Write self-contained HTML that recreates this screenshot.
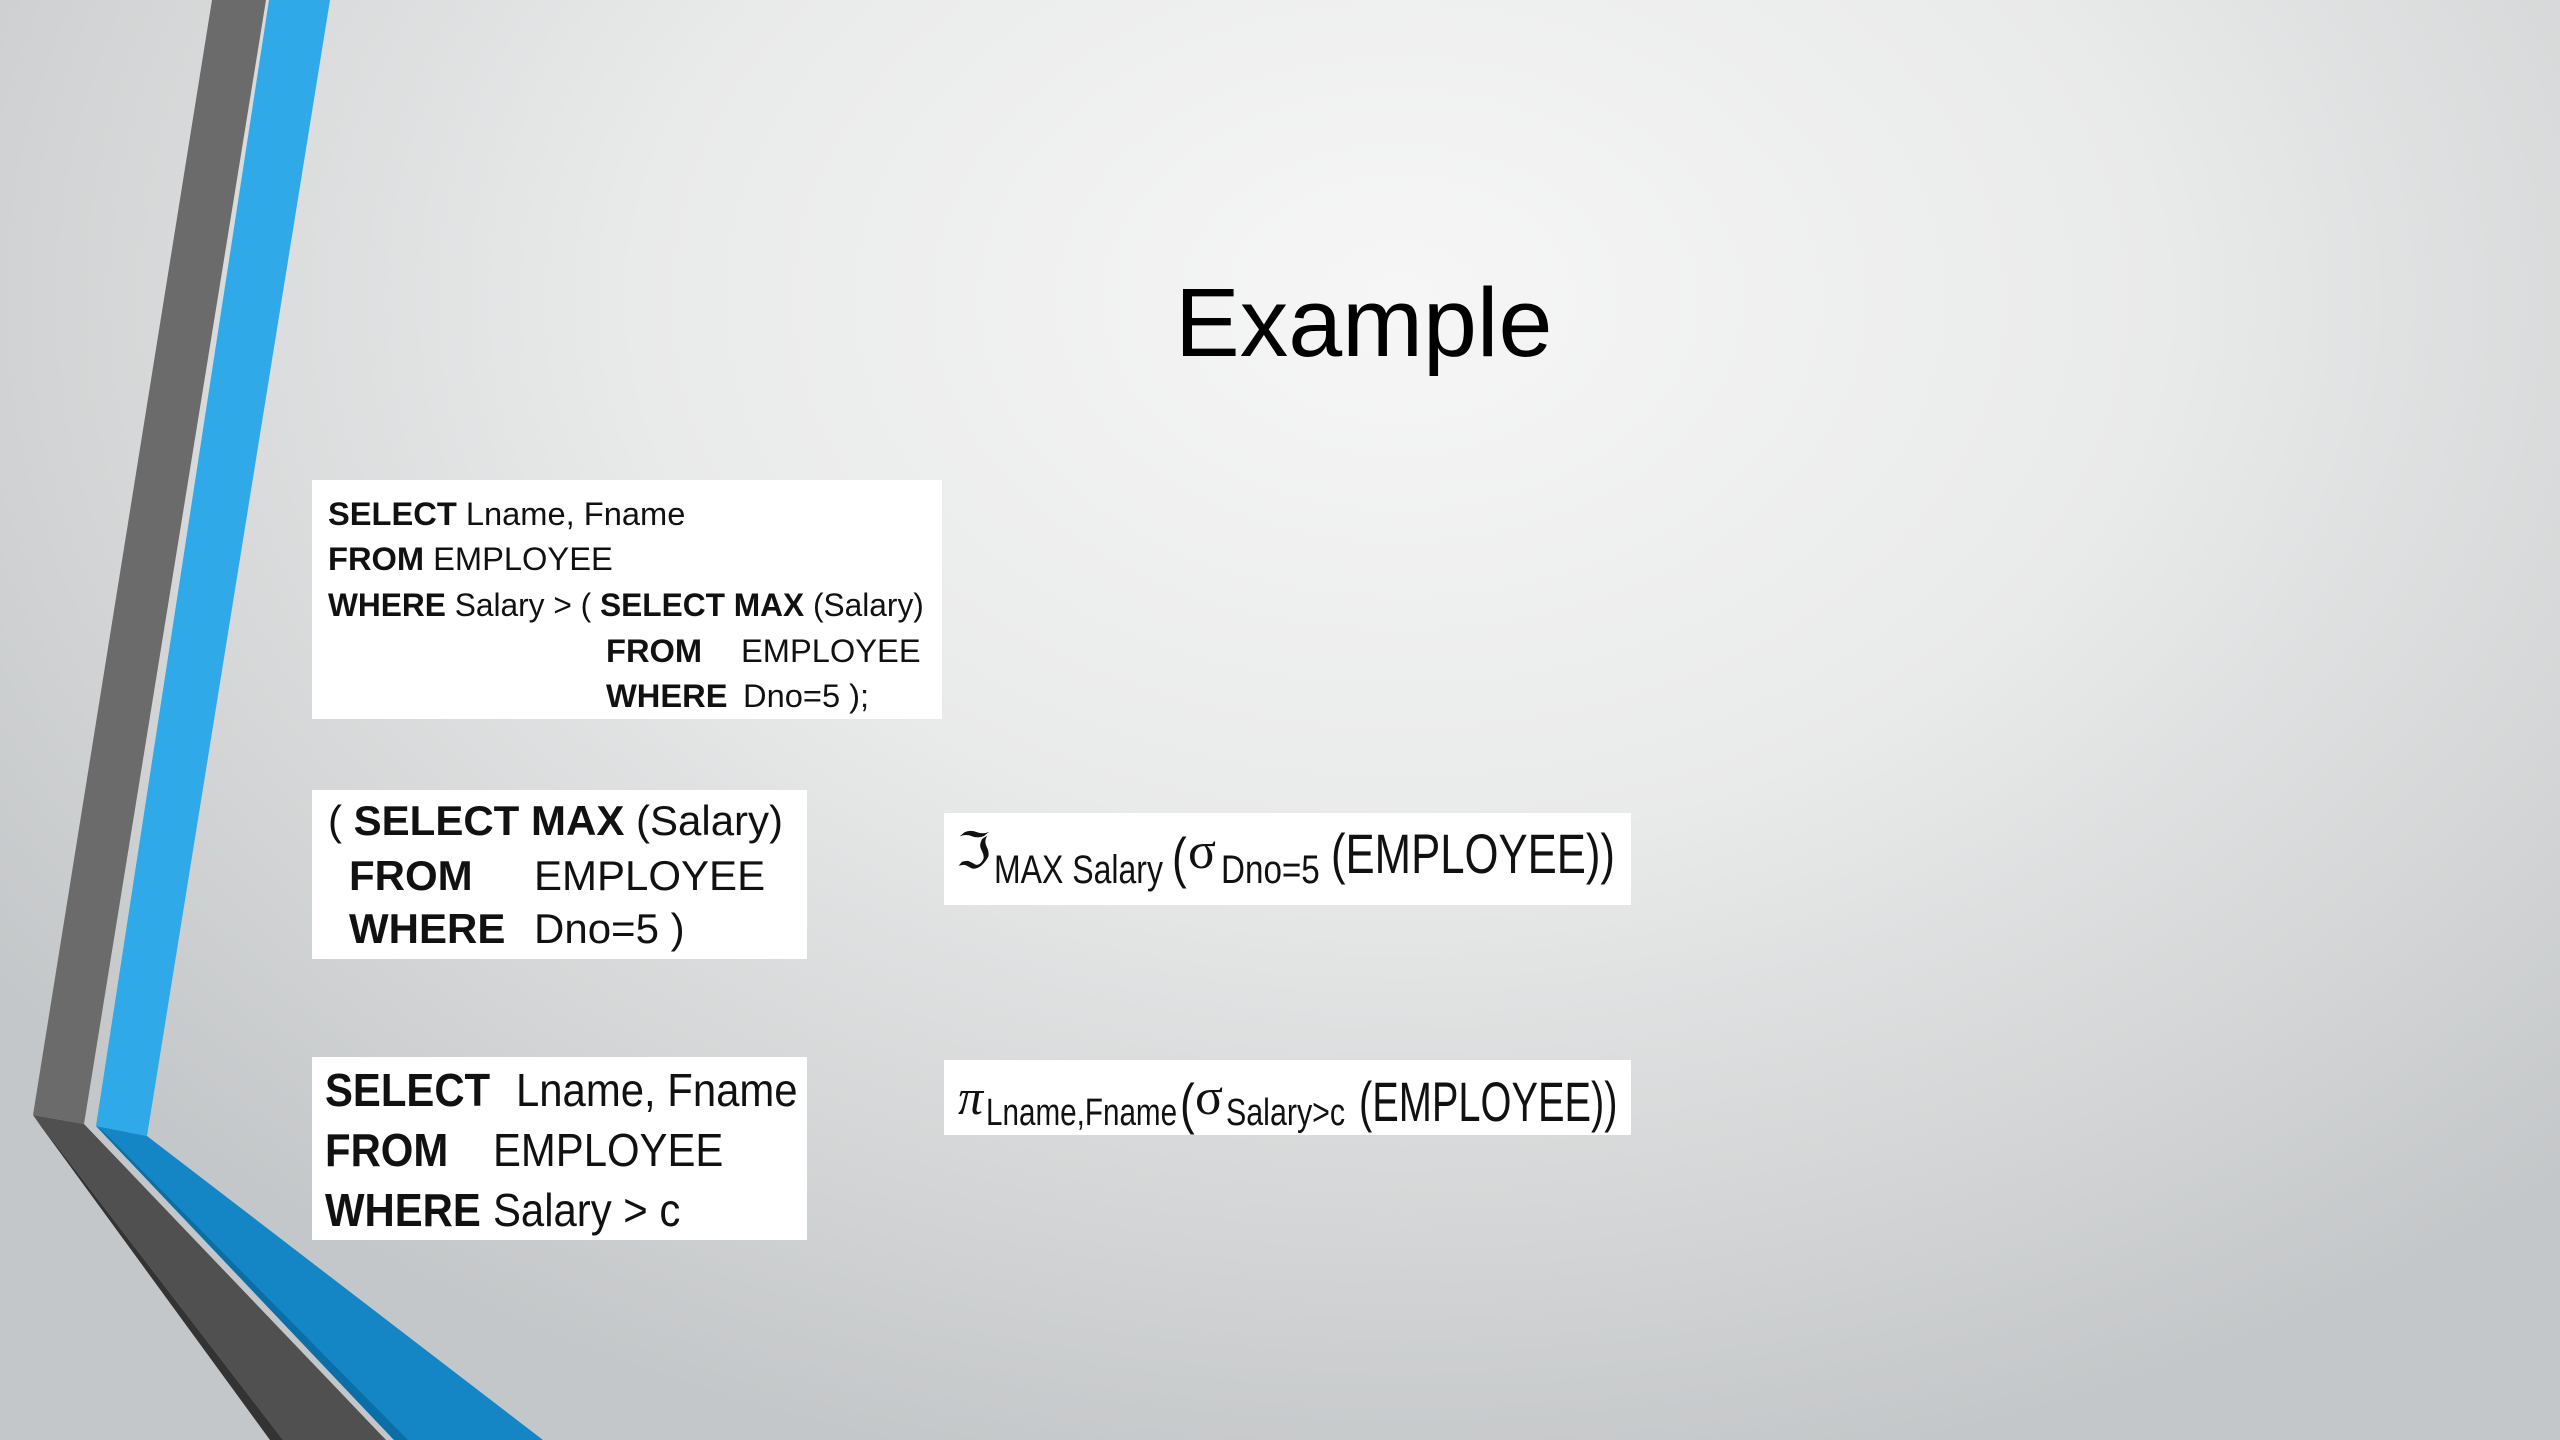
<!DOCTYPE html>
<html><head><meta charset="utf-8"><style>
body{margin:0;width:2560px;height:1440px;overflow:hidden;position:relative;font-family:"Liberation Sans",Arial,sans-serif;
background:radial-gradient(ellipse 1700px 1200px at 1400px 300px,#f6f6f6 0%,#e9eaea 45%,#d2d4d5 80%,#c4c7c9 100%);}
.box{position:absolute;background:#fff}
.t{position:absolute;white-space:pre;color:#111;line-height:1}
b{font-weight:bold}
.c{display:inline-block;transform-origin:0 0}
</style></head><body>
<svg width="2560" height="1440" style="position:absolute;left:0;top:0">
<polygon points="212,0 266,0 84,1124 33,1115" fill="#6b6b6b"/>
<polygon points="33,1115 84,1124 386,1440 283,1440" fill="#505050"/>
<polygon points="33,1115 283,1440 270,1440 40,1125" fill="#333"/>
<polygon points="269,0 330,0 147,1136 96,1126" fill="#2fa9e8"/>
<polygon points="96,1126 147,1136 543,1440 394,1440" fill="#1486c6"/>
<polygon points="96,1126 394,1440 408,1440 105,1133" fill="#0c6ea6"/>
</svg>
<div class="t" style="left:1175px;top:274px;font-size:97px;color:#000">Example</div>

<div class="box" style="left:312px;top:480px;width:630px;height:239px"></div>
<div class="t" style="left:328px;top:498px;font-size:32px"><span class="c" style="transform:scaleX(1.02)"><b>SELECT</b> Lname, Fname</span></div>
<div class="t" style="left:328px;top:543px;font-size:32px"><span class="c" style="transform:scaleX(1.02)"><b>FROM</b> EMPLOYEE</span></div>
<div class="t" style="left:328px;top:589px;font-size:32px"><span class="c" style="transform:scaleX(.99)"><b>WHERE</b> Salary &gt; ( <b>SELECT MAX</b> (Salary)</span></div>
<div class="t" style="left:606px;top:635px;font-size:32px"><span class="c" style="transform:scaleX(1.02)"><b>FROM</b></span></div>
<div class="t" style="left:741px;top:635px;font-size:32px"><span class="c" style="transform:scaleX(1.02)">EMPLOYEE</span></div>
<div class="t" style="left:606px;top:680px;font-size:32px"><span class="c" style="transform:scaleX(1.02)"><b>WHERE</b></span></div>
<div class="t" style="left:743px;top:680px;font-size:32px"><span class="c" style="transform:scaleX(1.02)">Dno=5 );</span></div>

<div class="box" style="left:312px;top:790px;width:495px;height:169px"></div>
<div class="t" style="left:328px;top:800px;font-size:42px"><span class="c" style="transform:scaleX(1.0)">( <b>SELECT MAX</b> (Salary)</span></div>
<div class="t" style="left:349px;top:855px;font-size:42px"><span class="c" style="transform:scaleX(1.0)"><b>FROM</b></span></div>
<div class="t" style="left:534px;top:855px;font-size:42px"><span class="c" style="transform:scaleX(1.0)">EMPLOYEE</span></div>
<div class="t" style="left:349px;top:908px;font-size:42px"><span class="c" style="transform:scaleX(1.0)"><b>WHERE</b></span></div>
<div class="t" style="left:534px;top:908px;font-size:42px"><span class="c" style="transform:scaleX(1.0)">Dno=5 )</span></div>

<div class="box" style="left:312px;top:1057px;width:495px;height:183px"></div>
<div class="t" style="left:325px;top:1067px;font-size:46px"><span class="c" style="transform:scaleX(.91)"><b>SELECT</b></span></div>
<div class="t" style="left:516px;top:1067px;font-size:46px"><span class="c" style="transform:scaleX(.91)">Lname, Fname</span></div>
<div class="t" style="left:325px;top:1127px;font-size:46px"><span class="c" style="transform:scaleX(.91)"><b>FROM</b></span></div>
<div class="t" style="left:493px;top:1127px;font-size:46px"><span class="c" style="transform:scaleX(.91)">EMPLOYEE</span></div>
<div class="t" style="left:325px;top:1187px;font-size:46px"><span class="c" style="transform:scaleX(.91)"><b>WHERE</b></span></div>
<div class="t" style="left:493px;top:1187px;font-size:46px"><span class="c" style="transform:scaleX(.91)">Salary &gt; c</span></div>

<div class="box" style="left:944px;top:813px;width:687px;height:92px"></div>
<div class="t" style="left:956px;top:826px;font-size:50px;font-family:'Liberation Serif',serif">ℑ</div>
<div class="t" style="left:994px;top:850px;font-size:40px"><span class="c" style="transform:scaleX(.8)">MAX Salary</span></div>
<div class="t" style="left:1172px;top:830px;font-size:56px"><span class="c" style="transform:scaleX(.79)">(</span></div>
<div class="t" style="left:1188px;top:826px;font-size:52px;font-family:'Liberation Serif',serif">σ</div>
<div class="t" style="left:1221px;top:850px;font-size:40px"><span class="c" style="transform:scaleX(.83)">Dno=5</span></div>
<div class="t" style="left:1331px;top:826px;font-size:56px"><span class="c" style="transform:scaleX(.78)">(EMPLOYEE))</span></div>

<div class="box" style="left:944px;top:1060px;width:687px;height:75px"></div>
<div class="t" style="left:958px;top:1072px;font-size:50px;font-family:'Liberation Serif',serif;font-style:italic">π</div>
<div class="t" style="left:986px;top:1094px;font-size:38px"><span class="c" style="transform:scaleX(.78)">Lname,Fname</span></div>
<div class="t" style="left:1180px;top:1076px;font-size:56px"><span class="c" style="transform:scaleX(.79)">(</span></div>
<div class="t" style="left:1195px;top:1072px;font-size:52px;font-family:'Liberation Serif',serif">σ</div>
<div class="t" style="left:1226px;top:1094px;font-size:38px"><span class="c" style="transform:scaleX(.8)">Salary&gt;c</span></div>
<div class="t" style="left:1359px;top:1074px;font-size:56px"><span class="c" style="transform:scaleX(.71)">(EMPLOYEE))</span></div>
</body></html>
